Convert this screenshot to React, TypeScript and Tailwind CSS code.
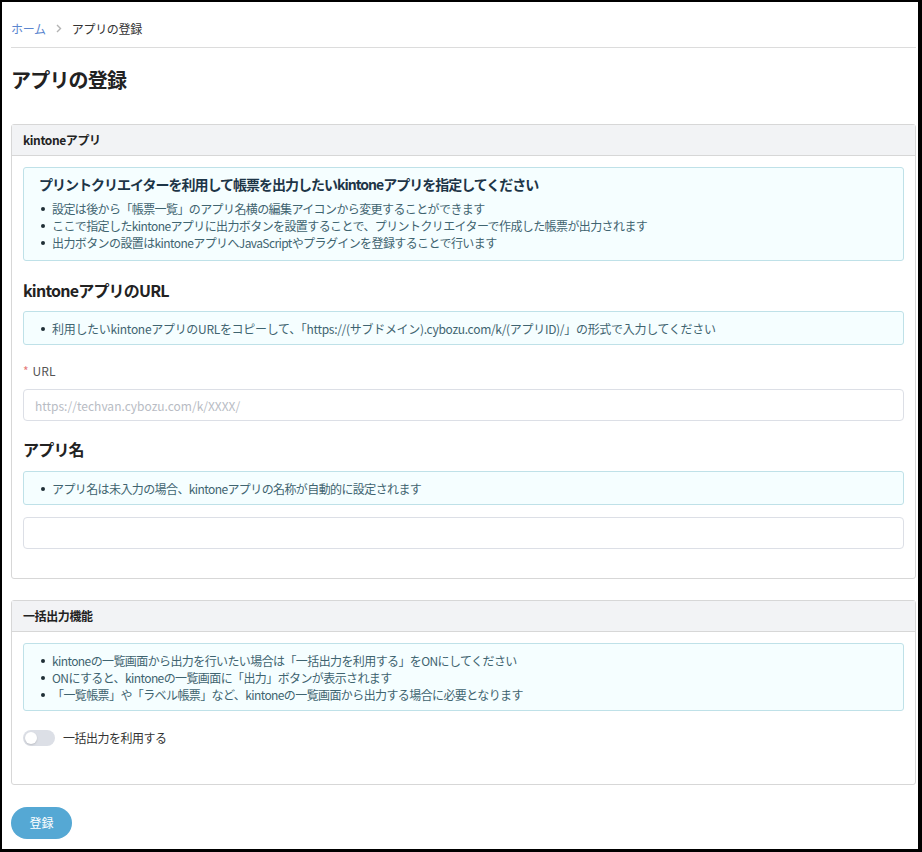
const FONT = "font-['Noto_Sans_CJK_JP','Noto_Sans',sans-serif]";

const Bullets = ({ items, tight = "tracking-[-0.6px]" }: { items: string[]; tight?: string }) => (
  <ul className="flex flex-col">
    {items.map((t) => (
      <li key={t} className={`flex items-center h-[17px] text-[12px] text-[#3f6470] ${tight}`}>
        <span className="w-[4px] h-[4px] rounded-full bg-[#1f2f36] ml-[2px] mr-[7px] shrink-0" />
        <span className="whitespace-nowrap">{t}</span>
      </li>
    ))}
  </ul>
);

const Info = ({ title, items, className = "", tight }: { title?: string; items: string[]; className?: string; tight?: string }) => (
  <div className={`border border-[#bfe1e8] bg-[#f5feff] rounded-[3px] pl-[15px] pr-3 ${className}`}>
    {title && (
      <p className="text-[14px] font-bold text-[#1d3547] leading-[20px] tracking-[-1px] mb-[6px]">{title}</p>
    )}
    <Bullets items={items} tight={tight} />
  </div>
);

const Card = ({ title, children }: { title: string; children: React.ReactNode }) => (
  <section className="border border-[#d7d7d7] rounded-[3px]">
    <div className="h-[31px] bg-[#f2f3f5] border-b border-[#d7d7d7] flex items-center px-[11px] text-[12px] font-bold tracking-[-0.4px] text-[#222]">
      {title}
    </div>
    {children}
  </section>
);

export default function App() {
  return (
    <div className={`w-[922px] h-[852px] box-border border-l-2 border-t-2 border-r-[4px] border-b-[3px] border-black bg-white ${FONT}`}>
      <div className="pl-[9px] pr-[2px]">
        {/* breadcrumb */}
        <nav className="pt-[18px] pb-[10px] border-b border-[#dcdcdc] flex items-center h-[46px] text-[12px] leading-[17px] tracking-[-0.3px]">
          <span className="text-[#5b86cf]">ホーム</span>
          <svg className="mx-[10px]" width="6" height="9" viewBox="0 0 6 9" fill="none">
            <path d="M1 1l3.5 3.5L1 8" stroke="#b3b3b3" strokeWidth="1.4" />
          </svg>
          <span className="text-[#333]">アプリの登録</span>
        </nav>

        <h1 className="text-[20px] font-bold text-[#222] leading-[28px] tracking-[-0.8px] mt-[18px]">アプリの登録</h1>

        <div className="mt-[30px]">
          <Card title="kintoneアプリ">
            <div className="px-[11px] pt-[11px] pb-[29px]">
              <Info
                className="pt-[6px] pb-[9px]"
                title="プリントクリエイターを利用して帳票を出力したいkintoneアプリを指定してください"
                items={[
                  "設定は後から「帳票一覧」のアプリ名横の編集アイコンから変更することができます",
                  "ここで指定したkintoneアプリに出力ボタンを設置することで、プリントクリエイターで作成した帳票が出力されます",
                  "出力ボタンの設置はkintoneアプリへJavaScriptやプラグインを登録することで行います",
                ]}
              />

              <h3 className="text-[16px] font-bold text-[#222] leading-[24px] tracking-[-0.8px] mt-[17px] mb-[9px]">kintoneアプリのURL</h3>
              <Info
                className="pt-[8px] pb-[7px]"
                tight="tracking-[-0.3px]"
                items={[
                  "利用したいkintoneアプリのURLをコピーして、「https://(サブドメイン).cybozu.com/k/(アプリID)/」の形式で入力してください",
                ]}
              />

              <label className="block text-[12px] leading-[17px] text-[#555] mt-[17px] mb-[10px]">
                <span className="text-[#e57a7a] mr-[4px]">*</span>URL
              </label>
              <input
                className="w-full h-[32px] border border-[#dcdfe6] rounded-[4px] px-[11px] text-[12px] outline-none placeholder:text-[#b8bcc4]"
                placeholder="https://techvan.cybozu.com/k/XXXX/"
              />

              <h3 className="text-[16px] font-bold text-[#222] leading-[24px] tracking-[-0.8px] mt-[16px] mb-[10px]">アプリ名</h3>
              <Info className="pt-[8px] pb-[7px]" items={["アプリ名は未入力の場合、kintoneアプリの名称が自動的に設定されます"]} />
              <input className="w-full h-[32px] border border-[#dcdfe6] rounded-[4px] px-[11px] text-[12px] outline-none mt-[12px]" />
            </div>
          </Card>
        </div>

        <div className="mt-[21px]">
          <Card title="一括出力機能">
            <div className="px-[11px] pt-[11px] pb-[38px]">
              <Info
                className="pt-[8px] pb-[7px]"
                items={[
                  "kintoneの一覧画面から出力を行いたい場合は「一括出力を利用する」をONにしてください",
                  "ONにすると、kintoneの一覧画面に「出力」ボタンが表示されます",
                  "「一覧帳票」や「ラベル帳票」など、kintoneの一覧画面から出力する場合に必要となります",
                ]}
              />
              <div className="flex items-center mt-[19px] h-[16px]">
                <div className="w-[32px] h-[16px] rounded-full bg-[#dcdfe6] relative">
                  <span className="absolute left-[2px] top-[2px] w-[12px] h-[12px] rounded-full bg-white shadow-[0_1px_2px_rgba(0,0,0,0.15)]" />
                </div>
                <span className="ml-[8px] text-[12px] tracking-[-0.5px] text-[#333]">一括出力を利用する</span>
              </div>
            </div>
          </Card>
        </div>

        <button className="mt-[22px] w-[61px] h-[32px] rounded-full bg-[#55a8d4] text-white text-[12px]">登録</button>
      </div>
    </div>
  );
}
